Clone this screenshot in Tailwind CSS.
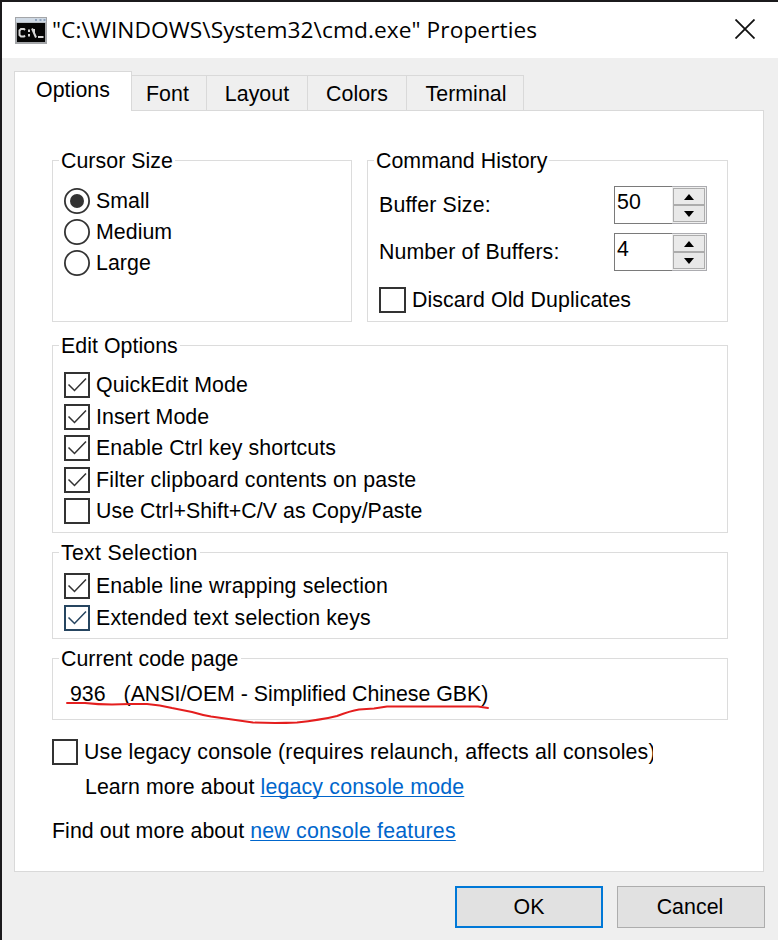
<!DOCTYPE html>
<html lang="en">
<head>
  <meta charset="UTF-8" />
  <meta name="viewport" content="width=device-width, initial-scale=1.0" />
  <title>"C:\WINDOWS\System32\cmd.exe" Properties</title>
  <script src="https://cdn.jsdelivr.net/npm/@tailwindcss/browser@4"></script>
</head>
<body class="bg-[#efefef]">
  <div class="relative flex h-[940px] w-[778px] flex-col overflow-hidden border-t-2 border-l-2 border-[#1b1a1c] bg-[#efefef] font-['Liberation_Sans',Arial,sans-serif] text-[21.33px] leading-[25px] tracking-[0.05px] whitespace-nowrap text-black">

    <!-- Title bar -->
    <header class="flex h-14 shrink-0 items-center bg-white pl-[13px]">
      <svg class="h-[27px] w-8 shrink-0" viewBox="0 0 32 27">
        <rect width="32" height="27" fill="#a3a5a8" />
        <rect x="1" y="1" width="30" height="4.500" fill="#cfd9e4" />
        <rect x="20" y="2" width="2" height="2" fill="#8fa3bd" />
        <rect x="24.500" y="2" width="2" height="2" fill="#8fa3bd" />
        <rect x="28.500" y="2" width="2" height="2" fill="#8fa3bd" />
        <rect x="2" y="6" width="28" height="19" fill="#050505" />
        <path d="M10 13 9 12H6L4.500 13.500V18L6 19.500H9L10 18.500M14 12.500V15M14 17V19.500M17 11.500 21 20.500M19 12V16M23 20H28.500" fill="none" stroke="#d6d6d6" stroke-width="2" />
      </svg>
      <h1 class="ml-[5px] font-['Open_Sans',sans-serif] text-[22.700px] leading-[30px] tracking-[0.07px]">"C:\WINDOWS\System32\cmd.exe" Properties</h1>
      <button class="mr-[23px] mb-0.5 ml-auto">
        <svg class="size-5" viewBox="0 0 20 20"><path d="M.5.5l19 19M19.500.5l-19 19" stroke="#111" stroke-width="1.800" /></svg>
      </button>
    </header>

    <!-- Tabs -->
    <nav class="mt-[13px] ml-3 flex h-[39px] shrink-0 items-end">
      <button class="z-10 -mb-px h-10 w-[118px] border border-b-0 border-[#d9d9d9] bg-white pb-[3px]">Options</button>
      <button class="h-[35px] w-[75px] border-t border-r border-[#d9d9d9] pt-0.5 pr-[3px]">Font</button>
      <button class="h-[35px] w-[101px] border-t border-r border-[#d9d9d9] pt-0.5">Layout</button>
      <button class="h-[35px] w-[99px] border-t border-r border-[#d9d9d9] pt-0.5">Colors</button>
      <button class="h-[35px] w-[117px] border-t border-r border-[#d9d9d9] pt-0.5 pl-0.5">Terminal</button>
    </nav>

    <main class="ml-3 flex h-[762px] w-[750px] shrink-0 flex-col border border-[#d9d9d9] bg-white pt-[37px] pl-[37px]">
      <div class="flex gap-[15px]">
        <fieldset class="h-[174px] w-[300px] border border-[#dcdcdc] pl-1.5">
          <legend class="px-0.5 pt-0.5 leading-[23px]">Cursor Size</legend>
          <div class="mt-[12px] pl-[5px]">
            <label class="flex h-[31px] items-center gap-1.5">
              <svg class="size-[26px]" viewBox="0 0 26 26"><circle cx="13" cy="13" r="12.100" fill="#fff" stroke="#333" stroke-width="1.800" /><circle cx="13" cy="13" r="7" fill="#333" /></svg>
              <span class="pt-0.5">Small</span>
            </label>
            <label class="flex h-[31px] items-center gap-1.5">
              <svg class="size-[26px]" viewBox="0 0 26 26"><circle cx="13" cy="13" r="12.100" fill="#fff" stroke="#333" stroke-width="1.800" /></svg>
              <span class="pt-0.5">Medium</span>
            </label>
            <label class="flex h-[31px] items-center gap-1.5">
              <svg class="size-[26px]" viewBox="0 0 26 26"><circle cx="13" cy="13" r="12.100" fill="#fff" stroke="#333" stroke-width="1.800" /></svg>
              <span class="pt-0.5">Large</span>
            </label>
          </div>
        </fieldset>

        <fieldset class="h-[174px] w-[361px] border border-[#dcdcdc] pl-1.5">
          <legend class="px-0.5 pt-0.5 leading-[23px]">Command History</legend>
          <div class="mt-[13px] flex flex-col gap-[9px] pr-5 pl-[5px]">
            <div class="flex h-[38px] items-center justify-between">
              <span class="tracking-[0.16px]">Buffer Size:</span>
              <div class="flex h-[38px] w-[93px]">
                <span class="w-[58px] border border-r-0 border-[#7a7a7a] pt-[3px] pl-0.5">50</span>
                <div class="flex w-[35px] flex-col border border-l-0 border-[#acacb0] bg-[#efefef] py-px pr-px pl-px">
                  <button class="flex h-[17px] items-center justify-center border border-[#acacac] bg-[#eaeaea]"><svg class="h-[6px] w-[10px]" viewBox="0 0 10 6"><path d="M0 6 5 0l5 6z" /></svg></button>
                  <button class="flex h-[17px] items-center justify-center border border-[#acacac] bg-[#e8e8e8]"><svg class="h-[6px] w-[10px]" viewBox="0 0 10 6"><path d="M0 0h10L5 6z" /></svg></button>
                </div>
              </div>
            </div>
            <div class="flex h-[38px] items-center justify-between">
              <span class="tracking-[0.1px]">Number of Buffers:</span>
              <div class="flex h-[38px] w-[93px]">
                <span class="w-[58px] border border-r-0 border-[#7a7a7a] pt-[3px] pl-0.5">4</span>
                <div class="flex w-[35px] flex-col border border-l-0 border-[#acacb0] bg-[#efefef] py-px pr-px pl-px">
                  <button class="flex h-[17px] items-center justify-center border border-[#acacac] bg-[#eaeaea]"><svg class="h-[6px] w-[10px]" viewBox="0 0 10 6"><path d="M0 6 5 0l5 6z" /></svg></button>
                  <button class="flex h-[17px] items-center justify-center border border-[#acacac] bg-[#e8e8e8]"><svg class="h-[6px] w-[10px]" viewBox="0 0 10 6"><path d="M0 0h10L5 6z" /></svg></button>
                </div>
              </div>
            </div>
            <label class="mt-[7px] flex h-[26px] items-center gap-1.5 tracking-[0.1px]">
              <span class="h-[26px] w-[27px] border-2 border-[#333]"></span>
              Discard Old Duplicates
            </label>
          </div>
        </fieldset>
      </div>

      <fieldset class="mt-[11px] h-[200px] w-[676px] border border-[#dcdcdc] pl-1.5">
        <legend class="px-0.5 pt-0.5 leading-[23px]">Edit Options</legend>
        <div class="mt-[11.500px] pl-[5px]">
          <label class="flex h-[31.500px] items-center gap-1.5 tracking-[0.1px]">
            <span class="size-[26px] border-2 border-[#333]"><svg class="size-[22px]" viewBox="0 0 22 22"><path d="M2.500 10.500 8.500 16.500 20 4.500" fill="none" stroke="#333" stroke-width="1.500" /></svg></span>
            QuickEdit Mode
          </label>
          <label class="flex h-[31.500px] items-center gap-1.5">
            <span class="size-[26px] border-2 border-[#333]"><svg class="size-[22px]" viewBox="0 0 22 22"><path d="M2.500 10.500 8.500 16.500 20 4.500" fill="none" stroke="#333" stroke-width="1.500" /></svg></span>
            <span class="pt-px">Insert Mode</span>
          </label>
          <label class="flex h-[31.500px] items-center gap-1.5 tracking-[0.12px]">
            <span class="size-[26px] border-2 border-[#333]"><svg class="size-[22px]" viewBox="0 0 22 22"><path d="M2.500 10.500 8.500 16.500 20 4.500" fill="none" stroke="#333" stroke-width="1.500" /></svg></span>
            Enable Ctrl key shortcuts
          </label>
          <label class="flex h-[31.500px] items-center gap-1.5 tracking-[0.18px]">
            <span class="size-[26px] border-2 border-[#333]"><svg class="size-[22px]" viewBox="0 0 22 22"><path d="M2.500 10.500 8.500 16.500 20 4.500" fill="none" stroke="#333" stroke-width="1.500" /></svg></span>
            <span class="pt-px">Filter clipboard contents on paste</span>
          </label>
          <label class="flex h-[31.500px] items-center gap-1.5">
            <span class="size-[26px] border-2 border-[#333]"></span>
            Use Ctrl+Shift+C/V as Copy/Paste
          </label>
        </div>
      </fieldset>

      <fieldset class="mt-[7px] h-[99px] w-[676px] border border-[#dcdcdc] pl-1.5">
        <legend class="px-0.5 pt-0.5 leading-[23px] tracking-[0.28px]">Text Selection</legend>
        <div class="mt-[5px] pl-[5px]">
          <label class="flex h-8 items-center gap-1.5 tracking-[0.13px]">
            <span class="size-[26px] border-2 border-[#333]"><svg class="size-[22px]" viewBox="0 0 22 22"><path d="M2.500 10.500 8.500 16.500 20 4.500" fill="none" stroke="#333" stroke-width="1.500" /></svg></span>
            Enable line wrapping selection
          </label>
          <label class="flex h-8 items-center gap-1.5 tracking-[0.16px]">
            <span class="size-[26px] border-2 border-[#264560]"><svg class="size-[22px]" viewBox="0 0 22 22"><path d="M2.500 10.500 8.500 16.500 20 4.500" fill="none" stroke="#264560" stroke-width="1.500" /></svg></span>
            Extended text selection keys
          </label>
        </div>
      </fieldset>

      <fieldset class="mt-[7px] h-[74px] w-[676px] border border-[#dcdcdc] pl-1.5">
        <legend class="px-0.5 pt-0.5 leading-[23px]">Current code page</legend>
        <div class="mt-[11px] flex gap-[18px] pl-[11px] tracking-[-0.01px]"><span>936</span><span>(ANSI/OEM - Simplified Chinese GBK)</span></div>
      </fieldset>

      <label class="mt-[19px] flex h-[26px] w-[601px] items-center gap-1.5 overflow-hidden tracking-[0.17px]">
        <span class="size-[26px] shrink-0 border-2 border-[#333]"></span>
        Use legacy console (requires relaunch, affects all consoles)
      </label>
      <p class="mt-[10px] pl-[33px] tracking-[0.07px]">Learn more about <a href="#" class="tracking-[0.18px] text-[#0066cc] underline decoration-1 underline-offset-2 [text-decoration-skip-ink:none]">legacy console mode</a></p>
      <p class="mt-[19px] tracking-[0.07px]">Find out more about <a href="#" class="tracking-[0.2px] text-[#0066cc] underline decoration-1 underline-offset-2 [text-decoration-skip-ink:none]">new console features</a></p>
    </main>

    <footer class="mt-[14px] flex justify-end gap-[14px] pr-[13px]">
      <button class="h-[42px] w-[148px] border-2 border-[#0078d7] bg-[#e1e1e1]">OK</button>
      <button class="h-[42px] w-[148px] border border-[#adadad] bg-[#e1e1e1] pr-0.5">Cancel</button>
    </footer>

    <!-- Pen mark under the code page -->
    <svg class="pointer-events-none absolute top-[698px] left-[58px] h-8 w-[440px]" viewBox="60 700 440 32">
      <path d="M67 703H85Q98 704.500 112 704.500L130 704H147Q160 705 172 708L192 712Q202 715 211 716.500L253 722.500Q275 723.500 297 722.500 320 720 337 716 350 711 359 709.500L374 708.500 387 706.500H478L488 708" fill="none" stroke="#e41e1e" stroke-width="1.900" stroke-linecap="round" stroke-linejoin="round" />
    </svg>
  </div>
</body>
</html>
